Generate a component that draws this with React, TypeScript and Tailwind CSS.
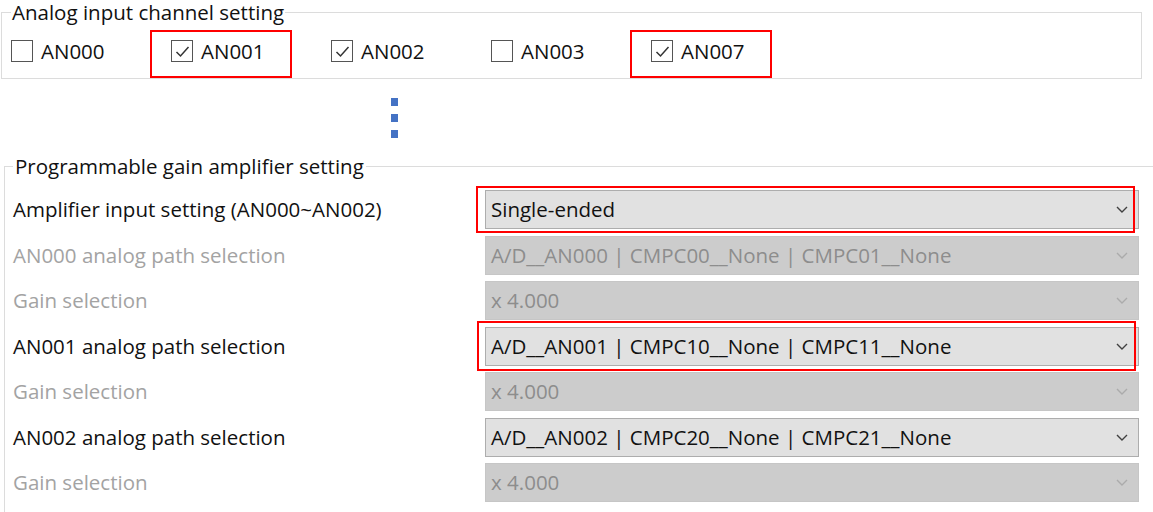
import { ReactNode } from 'react'

const channels = [
  { name: 'AN000', checked: false, marked: false },
  { name: 'AN001', checked: true, marked: true },
  { name: 'AN002', checked: true, marked: false },
  { name: 'AN003', checked: false, marked: false },
  { name: 'AN007', checked: true, marked: true },
]

type Row = { label: string; value: string; enabled: boolean; marked?: 'a' | 'b' }

const rows: Row[] = [
  { label: 'Amplifier input setting (AN000~AN002)', value: 'Single-ended', enabled: true, marked: 'a' },
  { label: 'AN000 analog path selection', value: 'A/D__AN000 | CMPC00__None | CMPC01__None', enabled: false },
  { label: 'Gain selection', value: 'x 4.000', enabled: false },
  { label: 'AN001 analog path selection', value: 'A/D__AN001 | CMPC10__None | CMPC11__None', enabled: true, marked: 'b' },
  { label: 'Gain selection', value: 'x 4.000', enabled: false },
  { label: 'AN002 analog path selection', value: 'A/D__AN002 | CMPC20__None | CMPC21__None', enabled: true },
  { label: 'Gain selection', value: 'x 4.000', enabled: false },
]

function CheckBox({ checked }: { checked: boolean }) {
  return (
    <span className="w-[22px] h-[22px] border-[1.5px] border-[#555555] bg-white flex items-center justify-center shrink-0">
      {checked && (
        <svg width="15" height="13" viewBox="0 0 15 13" fill="none">
          <path d="M1.5 7 L5.5 11 L13.5 2" stroke="#333333" strokeWidth="1.5" />
        </svg>
      )}
    </span>
  )
}

function Chevron({ color }: { color: string }) {
  return (
    <svg width="12" height="7" viewBox="0 0 12 7" fill="none">
      <path d="M1 1 L6 6 L11 1" stroke={color} strokeWidth="1.4" />
    </svg>
  )
}

function Select({ row }: { row: Row }) {
  const box = row.enabled
    ? 'bg-[#e1e1e1] border-[#adadad] text-[#111111]'
    : 'bg-[#cccccc] border-[#c6c6c6] text-[#8d8d8d]'
  return (
    <div className={`relative w-[654px] h-[39px] border flex items-center pl-[5px] pr-[10px] ${box}`}>
      <span className="flex-1 whitespace-nowrap">{row.value}</span>
      <Chevron color={row.enabled ? '#404040' : '#ababab'} />
      {row.marked === 'a' && (
        <span className="absolute left-[-10px] top-[-5px] w-[659px] h-[47px] border-2 border-[#ff0000]" />
      )}
      {row.marked === 'b' && (
        <span className="absolute left-[-9px] top-[-7px] w-[659px] h-[50px] border-2 border-[#ff0000]" />
      )}
    </div>
  )
}

function Group({ title, className, children }: { title: string; className: string; children: ReactNode }) {
  return (
    <fieldset className={`border border-[#dcdcdc] ${className}`}>
      <legend className="leading-[24px] text-[#111111]">{title}</legend>
      {children}
    </fieldset>
  )
}

export default function App() {
  return (
    <div
      className="w-[1153px] h-[512px] overflow-hidden bg-white text-[20.5px] text-[#111111]"
      style={{ fontFamily: '"Open Sans", "Noto Sans", sans-serif' }}
    >
      <Group title="Analog input channel setting" className="ml-[1px] w-[1141px] h-[79px] px-[9px] [&>legend]:px-[1px]">
        <div className="flex items-center mt-[16px]">
          {channels.map((ch) => (
            <div key={ch.name} className="relative w-[160px] flex items-center gap-[8px]">
              <CheckBox checked={ch.checked} />
              <span className="leading-[22px]">{ch.name}</span>
              {ch.marked && (
                <span className="absolute left-[-21px] top-[-10px] w-[142px] h-[48px] border-2 border-[#ff0000]" />
              )}
            </div>
          ))}
        </div>
      </Group>

      {/* vertical ellipsis between the two groups */}
      <div className="h-[75px] pl-[391px] pt-[19px] flex flex-col gap-[8px]">
        <span className="w-[7px] h-[8px] bg-[#4472c4]" />
        <span className="w-[7px] h-[8px] bg-[#4472c4]" />
        <span className="w-[7px] h-[8px] bg-[#4472c4]" />
      </div>

      <Group title="Programmable gain amplifier setting" className="ml-[4px] w-[1170px] h-[400px] pl-[8px] [&>legend]:px-[2px]">
        <div className="pt-[12px] flex flex-col gap-[6.5px]">
          {rows.map((row, i) => (
            <div key={i} className="flex items-center">
              <span className={`w-[472px] whitespace-nowrap ${row.enabled ? 'text-[#111111]' : 'text-[#a3a3a3]'}`}>
                {row.label}
              </span>
              <Select row={row} />
            </div>
          ))}
        </div>
      </Group>
    </div>
  )
}
